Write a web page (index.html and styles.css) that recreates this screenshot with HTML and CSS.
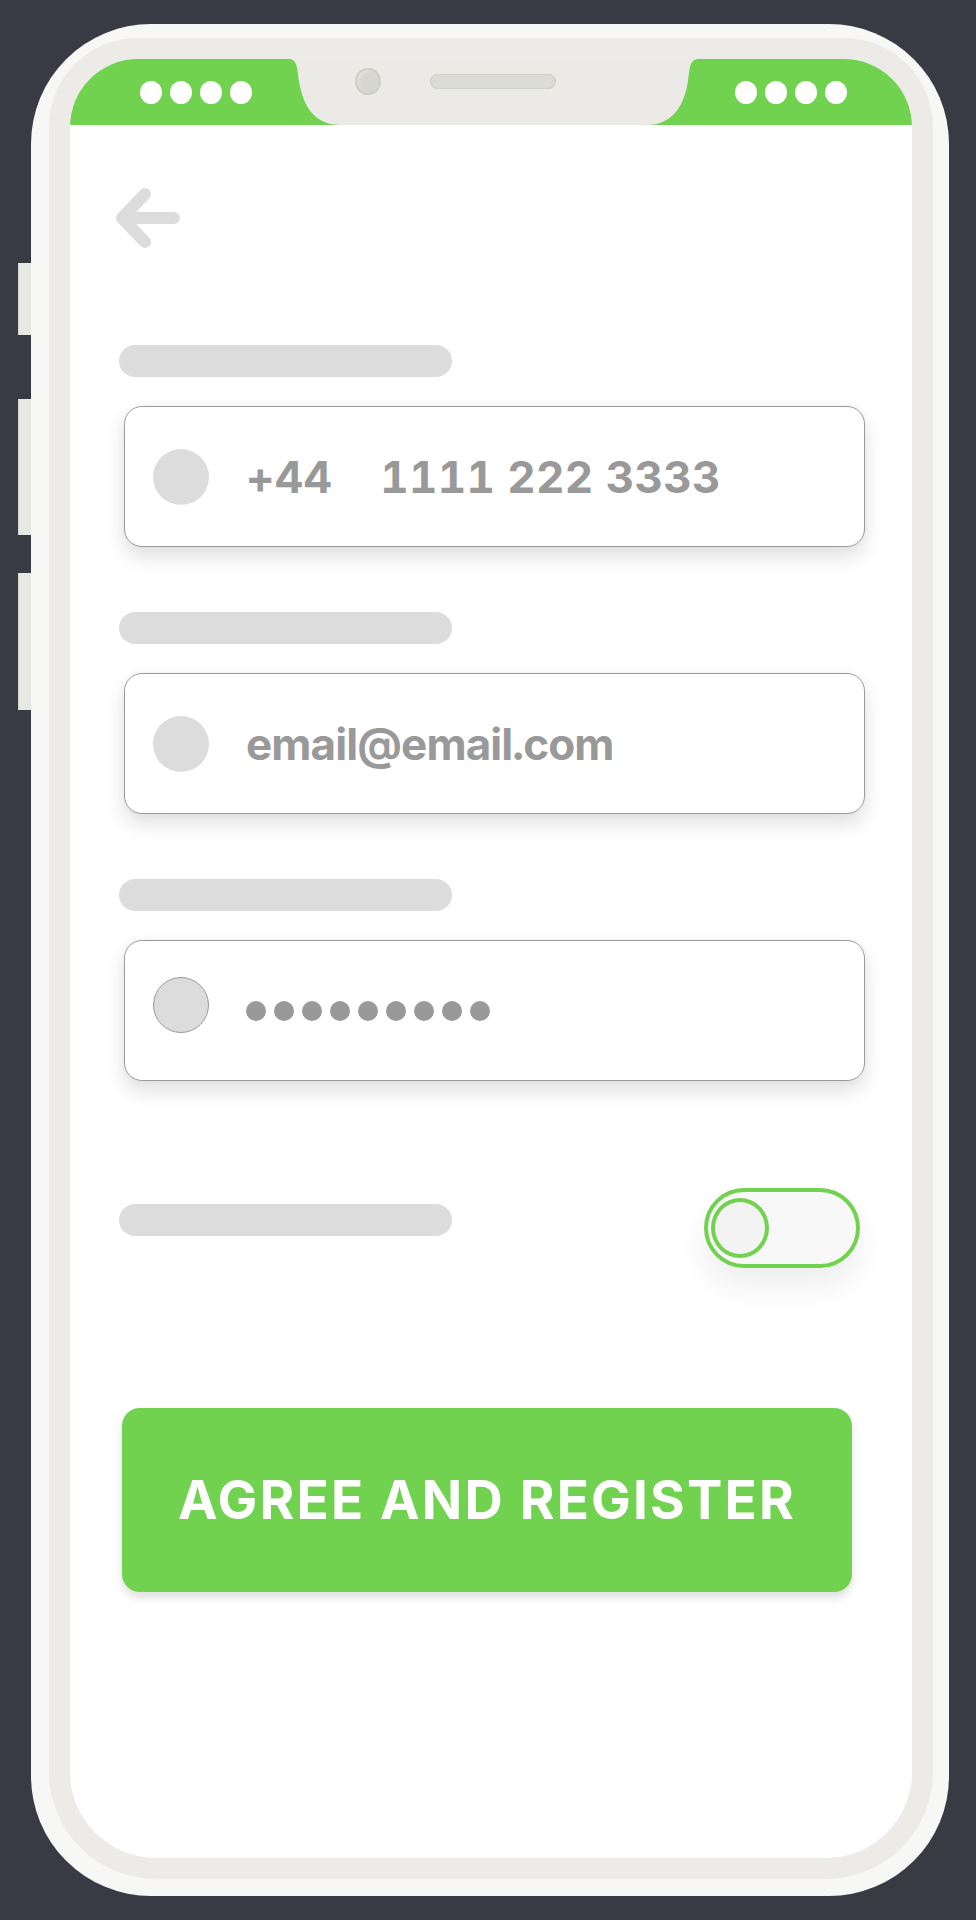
FILE: index.html
```html
<!DOCTYPE html>
<html>
<head>
	<title>Register</title>
	<link rel="stylesheet" href="styles.css">
</head>
<body>
	<div class="phone">
		<span class="side-btn side-btn-mute"></span>
		<span class="side-btn side-btn-up"></span>
		<span class="side-btn side-btn-down"></span>
		<div class="screen">
			<div class="statusbar">
				<div class="dots"><i></i><i></i><i></i><i></i></div>
				<div class="notch">
					<svg class="notch-shape" viewBox="0 0 411 66" preserveAspectRatio="none">
						<path d="M0 0 H411 C401 0 402 10 400 22 C396 48 384 66 358 66 H53 C27 66 15 48 11 22 C9 10 10 0 0 0 Z" fill="#EBEAE6"/>
					</svg>
					<span class="camera"></span>
					<span class="speaker"></span>
				</div>
				<div class="dots"><i></i><i></i><i></i><i></i></div>
			</div>
			<div class="content">
				<a class="back" href="#">
					<svg width="64" height="62" viewBox="0 0 64 62">
						<path d="M29 7 L6 31 L29 55 M6 31 H58" fill="none" stroke="#DCDCDC" stroke-width="12" stroke-linecap="round" stroke-linejoin="round"/>
					</svg>
				</a>

				<div class="form-group first">
					<div class="field-label"></div>
					<div class="field">
						<span class="field-icon"></span>
						<span class="field-text">+44</span>
						<span class="field-text phone-number">1111 222 3333</span>
					</div>
				</div>

				<div class="form-group">
					<div class="field-label"></div>
					<div class="field">
						<span class="field-icon"></span>
						<span class="field-text email">email@email.com</span>
					</div>
				</div>

				<div class="form-group">
					<div class="field-label"></div>
					<div class="field">
						<span class="field-icon outlined"></span>
						<span class="password"><i></i><i></i><i></i><i></i><i></i><i></i><i></i><i></i><i></i></span>
					</div>
				</div>

				<div class="toggle-row">
					<div class="field-label"></div>
					<span class="toggle"><span class="knob"></span></span>
				</div>

				<button class="register">AGREE AND REGISTER</button>
			</div>
		</div>
	</div>
</body>
</html>
```

FILE: styles.css
```css
body {
	margin: 0;
	background-color: #393A44;
	font-family: Inter, 'Open Sans', sans-serif;
}

.phone {
	position: relative;
	box-sizing: border-box;
	width: 918px;
	height: 1872px;
	margin: 24px 0 0 31px;
	padding: 35px 37px 38px 39px;
	border-radius: 120px;
	background-color: #F7F7F5;
}

/* hardware buttons on the left edge */
.side-btn {
	position: absolute;
	left: -13px;
	width: 13px;
	background-color: #E8E8E2;
	border-left: 1px solid #D6D6CF;
	box-sizing: border-box;
}
.side-btn-mute { top: 239px; height: 72px; }
.side-btn-up { top: 375px; height: 136px; }
.side-btn-down { top: 549px; height: 137px; }

.screen {
	display: flex;
	flex-direction: column;
	height: 100%;
	background-color: #fff;
	border-radius: 68px 68px 86px 86px;
	overflow: hidden;
	box-shadow: 0 0 0 21px #ECEBE7;
}

.statusbar {
	display: flex;
	justify-content: space-between;
	align-items: center;
	height: 66px;
	padding: 0 65px 0 70px;
	background-color: #70D24F;
	flex-shrink: 0;
}

.dots {
	display: flex;
	gap: 8px;
}
.dots i {
	width: 22px;
	height: 23px;
	border-radius: 50%;
	background-color: #fff;
}

.notch {
	position: relative;
	display: flex;
	align-items: center;
	gap: 49px;
	box-sizing: border-box;
	width: 411px;
	height: 66px;
	padding: 0 0 22px 67px;
	align-self: flex-start;
}
.notch-shape {
	position: absolute;
	left: 0;
	top: 0;
	width: 100%;
	height: 100%;
}
.camera {
	position: relative;
	width: 26px;
	height: 27px;
	border-radius: 50%;
	background-color: #D6D6D0;
	box-shadow: inset 0 0 0 2px #CECEC8, inset 3px 3px 4px #E4E4DF;
}
.speaker {
	position: relative;
	width: 126px;
	height: 15px;
	border-radius: 8px;
	background-color: #DCDCD6;
	box-shadow: inset 0 0 0 1px #CFCFC9;
}

.content {
	display: flex;
	flex-direction: column;
	padding: 0 47px 0 49px;
}

.back {
	display: block;
	width: 64px;
	height: 62px;
	margin: 62px 0 0 -3px;
}

.field-label {
	width: 333px;
	height: 32px;
	border-radius: 16px;
	background-color: #DCDCDC;
}

.form-group {
	margin-top: 65px;
}
.form-group.first {
	margin-top: 96px;
}

.field {
	display: flex;
	align-items: center;
	box-sizing: border-box;
	height: 141px;
	margin: 29px 0 0 5px;
	padding-left: 28px;
	border: 1.5px solid #9A9A9A;
	border-radius: 18px;
	background-color: #fff;
	box-shadow: 0 10px 20px rgba(0, 0, 0, 0.12), 0 0 10px rgba(0, 0, 0, 0.03);
}

.field-icon {
	box-sizing: border-box;
	width: 56px;
	height: 56px;
	margin-right: 37px;
	border-radius: 50%;
	background-color: #DCDCDC;
	flex-shrink: 0;
}
.field-icon.outlined {
	border: 1.5px solid #9A9A9A;
	margin-top: -12px;
}

.field-text {
	font-size: 44px;
	font-weight: 700;
	color: #999;
	letter-spacing: 0.3px;
	font-variant-numeric: tabular-nums;
}
.phone-number {
	margin-left: 48px;
}
.email {
	letter-spacing: -0.9px;
}

.password {
	display: flex;
	gap: 8px;
}
.password i {
	width: 20px;
	height: 20px;
	border-radius: 50%;
	background-color: #999;
}

.toggle-row {
	display: flex;
	justify-content: space-between;
	align-items: flex-start;
	margin: 107px 5px 0 0;
}
.toggle-row .field-label {
	margin-top: 16px;
}

.toggle {
	display: flex;
	align-items: center;
	box-sizing: border-box;
	width: 156px;
	height: 80px;
	padding-left: 3px;
	border: 4px solid #70D24F;
	border-radius: 40px;
	background-color: #F8F8F8;
	box-shadow: 0 18px 30px rgba(0, 0, 0, 0.07);
}
.knob {
	box-sizing: border-box;
	width: 58px;
	height: 60px;
	border: 4px solid #70D24F;
	border-radius: 50%;
	background-color: #F3F3F3;
}

.register {
	height: 184px;
	margin: 140px 13px 0 3px;
	border: none;
	border-radius: 18px;
	background-color: #70D24F;
	color: #fff;
	font-family: Inter, 'Open Sans', sans-serif;
	font-size: 53px;
	font-weight: 700;
	letter-spacing: 2.2px;
	box-shadow: 0 6px 8px rgba(0, 0, 0, 0.12);
	cursor: pointer;
}
```
